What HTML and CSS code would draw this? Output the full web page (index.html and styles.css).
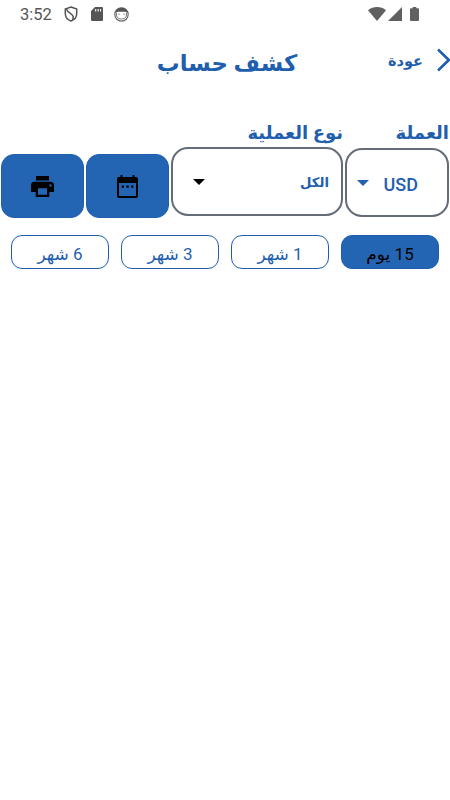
FILE: index.html
```
<!DOCTYPE html>
<html lang="ar" dir="rtl">
<head>
  <meta charset="UTF-8" />
  <meta name="viewport" content="width=device-width, initial-scale=1.0"/>
  <title>كشف حساب</title>
  <link rel="stylesheet" href="styles.css">
</head>
<body>

  <!-- Status bar -->
  <div class="status-bar" dir="ltr">
    <span class="time">3:52</span>
    <svg class="shield" width="14" height="16" viewBox="0 0 14 16" fill="none" stroke="#555" stroke-width="1.5">
      <path d="M7 1 L12.7 3 V7.5 C12.7 11 10.3 13.8 7 15 C3.7 13.8 1.3 11 1.3 7.5 V3 Z"/>
      <path d="M2.5 2.8 C3 5.5 4.5 6.3 7 7.8 C9.5 9.3 10 11 8.5 14"/>
    </svg>
    <svg class="sd" width="12" height="14" viewBox="0 0 12 14">
      <path fill="#555" d="M4 0 H11 Q12 0 12 1 V13 Q12 14 11 14 H1 Q0 14 0 13 V4 Z"/>
      <path stroke="#fff" stroke-width="1.1" d="M4.7 2 V4.6 M7.2 2 V4.6 M9.6 2 V4.6"/>
    </svg>
    <svg class="face" width="15" height="15" viewBox="0 0 15 15">
      <circle cx="7.5" cy="7.5" r="6.7" fill="#fff" stroke="#666" stroke-width="1.2"/>
      <path fill="#555" d="M1.5 5.5 C2.2 2.4 4.5 .8 7.5 .8 C10.5 .8 12.8 2.4 13.5 5.5 L11 4.8 H4 Z"/>
      <path fill="none" stroke="#777" d="M2.6 5.5 V9 C3.6 13 11.4 13 12.4 9 V5.5"/>
      <circle cx="5" cy="7.2" r=".6" fill="#666"/>
      <circle cx="10" cy="7.2" r=".6" fill="#666"/>
    </svg>
    <span class="spacer"></span>
    <svg class="wifi" width="18" height="14" viewBox="0 0 18 14"><path fill="#606060" d="M0 3.2 C5 -1 13 -1 18 3.2 L9 14 Z"/></svg>
    <svg class="signal" width="14" height="14" viewBox="0 0 14 14"><path fill="#606060" d="M14 0 V14 H0 Z"/></svg>
    <svg class="battery" width="9" height="14" viewBox="0 0 9 14"><path fill="#606060" d="M2.7 0 H6.3 V1.3 H8 Q9 1.3 9 2.3 V13 Q9 14 8 14 H1 Q0 14 0 13 V2.3 Q0 1.3 1 1.3 H2.7 Z"/></svg>
  </div>

  <!-- Header -->
  <header class="header">
    <div class="back">
      <svg width="13" height="24" viewBox="0 0 13 24" fill="none" stroke="#1f5fae" stroke-width="2.6"><path d="M1 1.5 L11.8 12 L1 22.5"/></svg>
      <span>عودة</span>
    </div>
    <h1>كشف حساب</h1>
  </header>

  <!-- Filters -->
  <div class="filters">
    <div class="field currency">
      <label>العملة</label>
      <div class="select">
        <span>USD</span>
        <svg width="12" height="6" viewBox="0 0 12 6"><path fill="#2361b0" d="M0 0 H12 L6 6 Z"/></svg>
      </div>
    </div>
    <div class="field operation">
      <label>نوع العملية</label>
      <div class="select">
        <span>الكل</span>
        <svg width="12" height="6" viewBox="0 0 12 6"><path fill="#000" d="M0 0 H12 L6 6 Z"/></svg>
      </div>
    </div>
    <button class="icon-btn calendar">
      <svg width="21" height="23" viewBox="0 0 21 23">
        <path fill="#000" fill-rule="evenodd" d="M3.5 0 H5.5 V2 H15.5 V0 H17.5 V2 H19 Q21 2 21 4 V21 Q21 23 19 23 H2 Q0 23 0 21 V4 Q0 2 2 2 H3.5 Z M2 8 V21 H19 V8 Z M4.7 10.5 H7 V12.8 H4.7 Z M9.4 10.5 H11.7 V12.8 H9.4 Z M14.1 10.5 H16.4 V12.8 H14.1 Z"/>
      </svg>
    </button>
    <button class="icon-btn">
      <svg width="23" height="21" viewBox="0 0 23 21">
        <path fill="#000" fill-rule="evenodd" d="M5 0 H18 V4.5 H5 Z M3.5 5.7 H19.5 Q23 5.7 23 9.2 V16 H18.3 V21 H4.7 V16 H0 V9.2 Q0 5.7 3.5 5.7 Z M7 12.3 V18.8 H16 V12.3 Z M19.5 8.2 A1.2 1.2 0 1 0 19.5 10.6 A1.2 1.2 0 1 0 19.5 8.2 Z"/>
      </svg>
    </button>
  </div>

  <!-- Periods -->
  <div class="periods">
    <button class="period active"><span>15 يوم</span></button>
    <button class="period"><span>1 شهر</span></button>
    <button class="period"><span>3 شهر</span></button>
    <button class="period"><span>6 شهر</span></button>
  </div>

</body>
</html>
```
FILE: styles.css
```
* {
  box-sizing: border-box;
}

body {
  margin: 0;
  background: #fff;
  color: #1f5fae;
  font-family: Roboto, "DejaVu Sans", sans-serif;
}

button {
  padding: 0;
  font-family: inherit;
  color: inherit;
}

svg {
  display: block;
  flex: none;
}

.status-bar {
  display: flex;
  align-items: center;
  height: 28px;
  padding: 0 31px 0 20px;
}

.time {
  width: 44px;
  padding-top: 1px;
  font-size: 16.5px;
  color: #555;
}

.sd {
  margin-left: 13px;
}

.face {
  margin-left: 11px;
}

.spacer {
  flex: 1;
}

.signal {
  margin-left: 2px;
}

.battery {
  margin-left: 8px;
}

.header {
  display: grid;
  grid-template-columns: 105px 1fr 109px;
  height: 92px;
}

.back {
  display: flex;
  gap: 14px;
  padding-top: 20px;
  font-size: 14.5px;
  font-weight: bold;
  line-height: 28px;
}

h1 {
  margin: 0;
  padding-top: 18px;
  font-size: 22.8px;
  line-height: 36px;
  text-align: center;
  white-space: nowrap;
}

.filters {
  display: flex;
  align-items: flex-end;
  gap: 2px;
  height: 98px;
  padding: 0 1px;
}

.field label {
  display: block;
  height: 27px;
  font-size: 18px;
  font-weight: bold;
  line-height: 26px;
  white-space: nowrap;
}

.currency label {
  line-height: 24px;
}

.select {
  display: flex;
  align-items: center;
  justify-content: space-between;
  border: 2px solid #646c77;
  border-radius: 17px;
}

.currency {
  width: 104px;
  padding-bottom: 1px;
}

.currency .select {
  height: 69px;
  padding: 0 29px 0 10px;
  font-size: 18px;
  font-weight: 500;
}

.currency span {
  padding-top: 3px;
}

.operation {
  width: 172px;
  padding-bottom: 2px;
}

.operation .select {
  height: 69px;
  padding: 0 12px 0 20px;
  font-size: 13.2px;
  font-weight: bold;
}

.operation span {
  padding-top: 2px;
}

.icon-btn {
  display: flex;
  align-items: center;
  justify-content: center;
  width: 83px;
  height: 64px;
  border: 1px solid #1f5fae;
  border-radius: 13px;
  background: #2465b3;
}

.periods {
  display: flex;
  gap: 12px;
  padding: 17px 11px 0;
}

.period {
  width: 98px;
  height: 34px;
  padding-top: 4px;
  border: 1px solid #1f5fae;
  border-radius: 11px;
  background: #fff;
  font-size: 17px;
  line-height: 27px;
}

.period.active {
  background: #2465b3;
  color: #000;
}
```
